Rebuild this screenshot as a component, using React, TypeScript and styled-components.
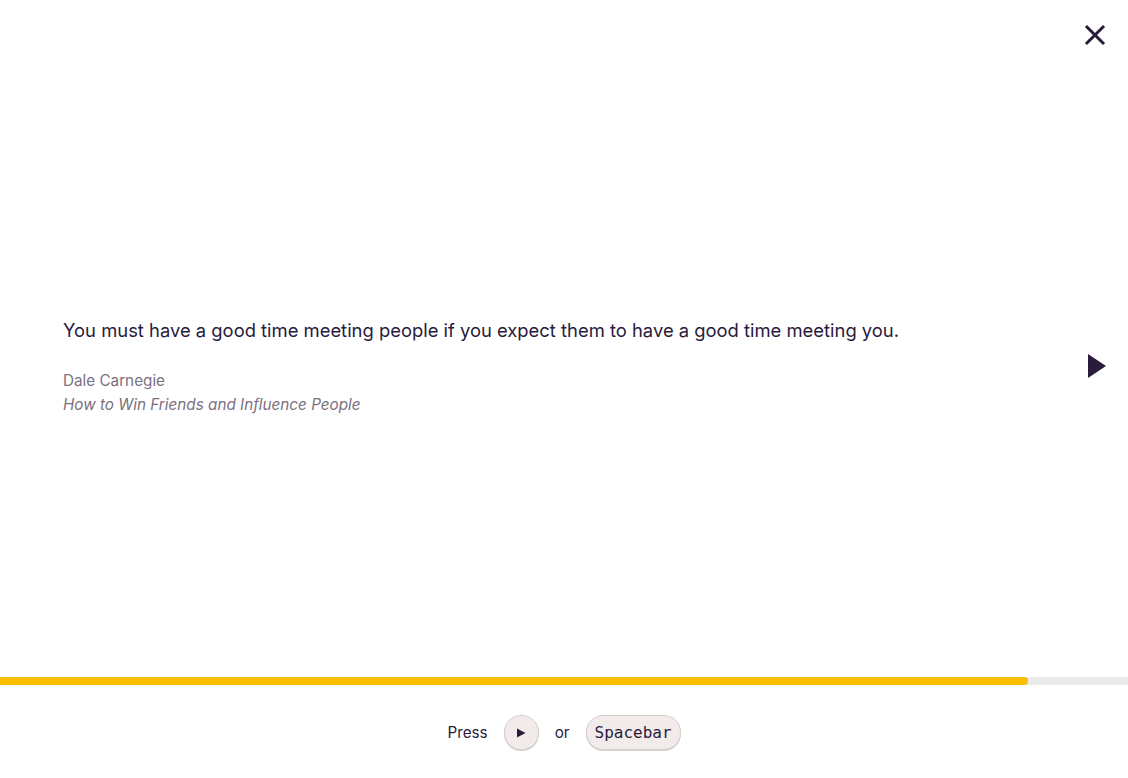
import React from "react";
import styled, { createGlobalStyle } from "styled-components";

const Global = createGlobalStyle`
  html, body { margin: 0; padding: 0; background: #ffffff; }
  body { font-family: Inter, "Noto Sans", sans-serif; color: #2a1b3d; }
`;

const Page = styled.div`
  width: 1128px;
  height: 778px;
  display: flex;
  flex-direction: column;
  background: #ffffff;
`;

const Stage = styled.main`
  position: relative;
  height: 677px;
  display: flex;
  align-items: center;
  padding: 57px 20px 0 63px;
  box-sizing: border-box;
`;

const CloseButton = styled.button`
  position: absolute;
  top: 22px;
  right: 20px;
  width: 26px;
  height: 26px;
  padding: 0;
  border: none;
  background: transparent;
  display: flex;
  align-items: center;
  justify-content: center;
  cursor: pointer;
`;

const QuoteBlock = styled.figure`
  flex: 1;
  margin: 0;
  display: flex;
  flex-direction: column;
`;

const QuoteText = styled.blockquote`
  margin: 0 0 26px;
  font-size: 18.4px;
  line-height: 26px;
  color: #2a1b3d;
`;

const Author = styled.div`
  font-size: 15.25px;
  line-height: 24px;
  color: #7a7080;
`;

const Source = styled.cite`
  font-size: 15.25px;
  line-height: 24px;
  color: #7a7080;
  font-style: italic;
`;

const NextButton = styled.button`
  width: 30px;
  height: 30px;
  margin-right: -4px;
  margin-top: -2px;
  padding: 0;
  border: none;
  background: transparent;
  display: flex;
  align-items: center;
  justify-content: center;
  cursor: pointer;
`;

const Track = styled.div`
  height: 8px;
  background: #ebebeb;
`;

const Fill = styled.div`
  height: 100%;
  background: #fbbd00;
  border-radius: 0 4px 4px 0;
`;

const Footer = styled.footer`
  flex: 1;
  display: flex;
  align-items: center;
  justify-content: center;
  gap: 16px;
  padding-top: 2px;
  color: #2a1b3d;
`;

const Word = styled.span`
  font-size: 15.25px;
`;

const KeyCap = styled.span<{ $round?: boolean }>`
  display: inline-flex;
  align-items: center;
  justify-content: center;
  height: 33px;
  min-width: 33px;
  padding: ${(p) => (p.$round ? "0" : "0 8px")};
  border-radius: 17px;
  background: #f1ecea;
  border: 1px solid #d6cfcf;
  box-shadow: 0 1px 0 #d6cfcf;
  font-family: "DejaVu Sans Mono", monospace;
  font-size: 16px;
  color: #2a1b3d;
`;

export default function App() {
  return (
    <>
      <Global />
      <Page>
        <Stage>
          <CloseButton aria-label="Close">
            <svg width="22" height="22" viewBox="0 0 22 22">
              <path d="M3 3 L19 19 M19 3 L3 19" stroke="#2a1b3d" strokeWidth="3" strokeLinecap="square" />
            </svg>
          </CloseButton>
          <QuoteBlock>
            <QuoteText>
              You must have a good time meeting people if you expect them to have a good time meeting you.
            </QuoteText>
            <Author>Dale Carnegie</Author>
            <Source>How to Win Friends and Influence People</Source>
          </QuoteBlock>
          <NextButton aria-label="Next">
            <svg width="20" height="26" viewBox="0 0 20 26">
              <path d="M1 1 L19 13 L1 25 Z" fill="#2a1b3d" />
            </svg>
          </NextButton>
        </Stage>
        <Track>
          <Fill style={{ width: `${(1028 / 1128) * 100}%` }} />
        </Track>
        <Footer>
          <Word>Press</Word>
          <KeyCap $round>
            <svg width="10" height="10" viewBox="0 0 10 10">
              <path d="M1 0.5 L9.5 5 L1 9.5 Z" fill="#2a1b3d" />
            </svg>
          </KeyCap>
          <Word>or</Word>
          <KeyCap>Spacebar</KeyCap>
        </Footer>
      </Page>
    </>
  );
}
